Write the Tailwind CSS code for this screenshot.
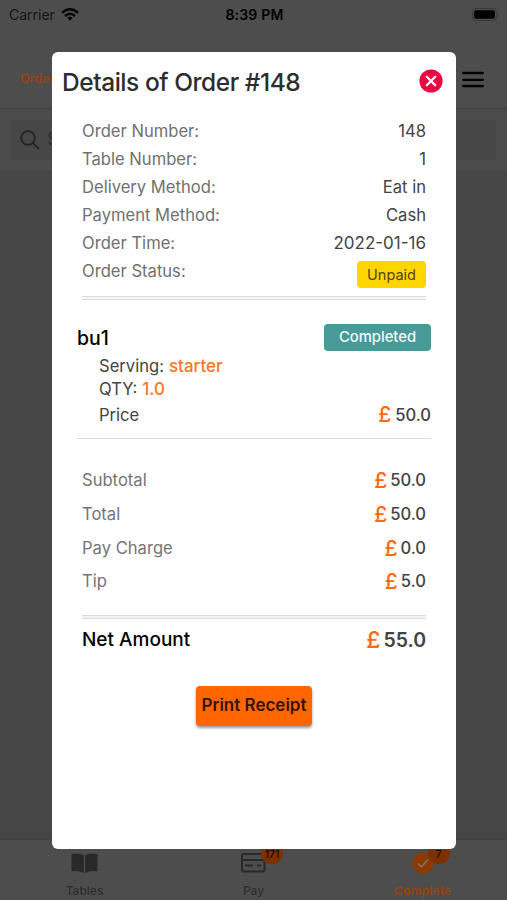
<!DOCTYPE html>
<html lang="en">
<head>
<meta charset="utf-8">
<title>Order details</title>
<script src="https://cdn.jsdelivr.net/npm/@tailwindcss/browser@4"></script>
</head>
<body class="relative h-[900px] w-[507px] overflow-hidden bg-[#474747] font-['Inter',sans-serif]">
<div class="flex h-full flex-col">
  <header class="h-[109px] shrink-0 border-b border-[#424242] bg-[#4d4d4d]">
    <div class="grid h-7 grid-cols-3 items-center pl-[9px] pr-[7px] text-[13.5px] text-[#151515]">
      <div class="flex items-center gap-[6px]"><span class="text-[14px]">Carrier</span>
        <svg class="h-[13px] w-[18px]" viewBox="0 0 18 13" fill="none" stroke="#050505" stroke-width="2.5"><path d="M1 4.8Q9-2.2 17 4.8M4 8Q9 3.6 14 8"/><path d="M6.3 9.8Q9 7.5 11.7 9.8L9 12.8Z" fill="#050505" stroke="none"/></svg>
      </div>
      <span class="text-center text-[14px] font-semibold tracking-[.2px] text-black">8:39 PM</span>
      <svg class="h-[13px] w-[29px] justify-self-end" viewBox="0 0 30 14"><rect x="1" y=".5" width="26" height="13" rx="4" fill="none" stroke="#373737"/><rect x="2.8" y="2.3" width="22.4" height="9.4" rx="2.2" fill="#000"/><path d="M28.3 5v4q1.6-2 0-4" fill="#303030"/></svg>
    </div>
    <div class="flex h-[102px] items-center justify-between pl-5 pr-[23px] text-[12.5px] font-semibold text-[#9a420e]">
      <span>Order</span>
      <svg class="h-[17px] w-[22px]" viewBox="0 0 22 17" stroke="#000" stroke-width="2.3" stroke-linecap="round"><path d="M1.2 2h19.6M1.2 8.8h19.6M1.2 15h19.6"/></svg>
    </div>
  </header>
  <div class="h-[61px] shrink-0 bg-[#4b4b4b] px-[11px] py-[11px]">
    <div class="flex h-[40px] items-center gap-[7px] rounded bg-[#474747] pl-[9px] text-[17px] text-[#2c2c2c]">
      <svg class="h-5 w-5" viewBox="0 0 20 20" fill="none" stroke="#242424" stroke-width="1.8"><circle cx="8" cy="8" r="6.8"/><path d="M13 13l6 6"/></svg>
      <span>S</span>
    </div>
  </div>
  <main class="flex-1"></main>
  <nav class="grid h-[60px] shrink-0 grid-cols-3 bg-[#4d4d4d] shadow-[0_-1px_4px_#3f3f3f] text-[12px] text-[#2d2d2d]">
    <div class="flex flex-col items-center pt-3">
      <svg class="h-[22px] w-[27px]" viewBox="0 0 27 22" fill="#292929"><path d="M.5 2Q8 .5 12.8 3v18Q8 18.3.5 19.2ZM26.5 2Q19 .5 14.2 3v18q4.8-2.7 12.3-1.8Z"/></svg>
      <span class="mt-[9px] leading-4 font-medium">Tables</span>
    </div>
    <div class="flex flex-col items-center pt-3">
      <div class="relative">
        <svg class="h-[22px] w-[27px]" viewBox="0 0 27 22" fill="none" stroke="#292929" stroke-width="2"><rect x="2" y="2" width="22.5" height="17.5" rx="2"/><path d="M2 8h22.5M5 13.5h8M17 13.5h4"/></svg>
        <span class="absolute -top-[10px] left-[21px] flex h-[22px] w-[22px] items-center justify-center rounded-full bg-[#7d3000] pt-[3px] text-[10.5px] font-medium text-[#160800]">171</span>
      </div>
      <span class="mt-[9px] leading-4 font-medium">Pay</span>
    </div>
    <div class="flex flex-col items-center pt-3 text-[#9a420e]">
      <div class="relative">
        <svg class="h-[22px] w-[22px]" viewBox="0 0 22 22"><circle cx="11" cy="11" r="10.5" fill="#8c3a00"/><path d="M6 11.5l3.3 3.3L16 7.5" fill="none" stroke="#7d7568" stroke-width="1.5"/></svg>
        <span class="absolute -top-[10px] left-[16px] flex h-[22px] w-[22px] items-center justify-center rounded-full bg-[#7d3000] pt-[3px] text-[10.5px] font-medium text-[#160800]">7</span>
      </div>
      <span class="mt-[9px] text-[12.3px] leading-4 font-semibold">Complete</span>
    </div>
  </nav>
</div>

<section class="absolute left-[52px] top-[52px] flex h-[797px] w-[404px] flex-col rounded-md bg-white text-[16.6px] text-[#444]">
  <div class="flex h-[58px] items-center justify-between pl-[10px] pr-[13px]">
    <h1 class="pt-[2px] text-[24.5px] font-medium tracking-[-0.45px] text-[#2d2d2d]">Details of Order #148</h1>
    <svg class="h-6 w-6" viewBox="0 0 24 24"><circle cx="12" cy="12" r="11.6" fill="#eb0842"/><path d="M7.8 7.8l8.4 8.4m0-8.4l-8.4 8.4" stroke="#fff" stroke-width="2.2" stroke-linecap="round"/></svg>
  </div>
  <dl class="mt-[7px] px-[30px] leading-7 [&_dt]:text-[#717171]">
    <div class="flex justify-between"><dt>Order Number:</dt><dd>148</dd></div>
    <div class="flex justify-between"><dt>Table Number:</dt><dd>1</dd></div>
    <div class="flex justify-between"><dt>Delivery Method:</dt><dd>Eat in</dd></div>
    <div class="flex justify-between"><dt>Payment Method:</dt><dd>Cash</dd></div>
    <div class="flex justify-between"><dt>Order Time:</dt><dd class="text-[17px]">2022-01-16</dd></div>
    <div class="flex h-[31px] justify-between"><dt>Order Status:</dt><dd class="mt-1 flex h-[27px] w-[69px] items-center justify-center rounded bg-[#ffd500] text-[14.5px] text-[#4d4510]">Unpaid</dd></div>
  </dl>
  <div class="mx-[30px] mt-[8px] h-[4px] border-y border-[#dcdcdc] bg-[#f4f4f4]"></div>
  <article class="mx-[25px] mt-[24px] h-[115px] shrink-0 border-b border-[#dedede]">
    <div class="flex h-[27px] items-center justify-between">
      <h2 class="pt-[2px] text-[19.5px] font-medium text-black">bu1</h2>
      <span class="flex h-[27px] w-[107px] items-center justify-center rounded bg-[#489a99] text-[14.8px] font-medium text-[#eefafa]">Completed</span>
    </div>
    <div class="mt-[3px] flex gap-[5px] pl-[22px] leading-6"><span>Serving:</span><span class="text-[17px] font-medium text-[#ff7623]">starter</span></div>
    <div class="-mt-[1px] flex gap-[5px] pl-[22px] leading-6"><span>QTY:</span><span class="text-[17px] font-medium text-[#ff7623]">1.0</span></div>
    <div class="mt-[2px] flex justify-between pl-[22px] leading-6"><span>Price</span><span class="flex gap-[4px] font-medium"><b class="text-[21px] font-medium text-[#ff6a0c]">£</b>50.0</span></div>
  </article>
  <dl class="mt-[25px] px-[30px] leading-[33.8px] [&_dt]:text-[#757575] [&_dd]:flex [&_dd]:gap-[3px] [&_dd]:font-medium">
    <div class="flex h-[33.8px] justify-between"><dt>Subtotal</dt><dd><b class="text-[21px] font-medium text-[#ff6a0c]">£</b>50.0</dd></div>
    <div class="flex h-[33.8px] justify-between"><dt>Total</dt><dd><b class="text-[21px] font-medium text-[#ff6a0c]">£</b>50.0</dd></div>
    <div class="flex h-[33.8px] justify-between"><dt>Pay Charge</dt><dd><b class="text-[21px] font-medium text-[#ff6a0c]">£</b>0.0</dd></div>
    <div class="flex h-[33.8px] justify-between"><dt>Tip</dt><dd><b class="text-[21px] font-medium text-[#ff6a0c]">£</b>5.0</dd></div>
  </dl>
  <div class="mx-[30px] mt-[16px] h-[4px] border-y border-[#dcdcdc] bg-[#f4f4f4]"></div>
  <div class="mx-[30px] mt-[6px] flex h-[30px] items-center justify-between text-[19px] font-medium"><span class="text-black">Net Amount</span><span class="flex items-center gap-[3px] text-[19.5px] font-semibold"><b class="text-[23px] font-medium text-[#ff6a0c]">£</b>55.0</span></div>
  <button class="mx-auto mt-[31px] flex h-[40px] w-[116px] shrink-0 items-center justify-center whitespace-nowrap rounded bg-[#ff6600] text-[17px] font-semibold text-[#35150a] shadow-[0_2px_3px_#0006]">Print Receipt</button>
</section>
</body>
</html>
